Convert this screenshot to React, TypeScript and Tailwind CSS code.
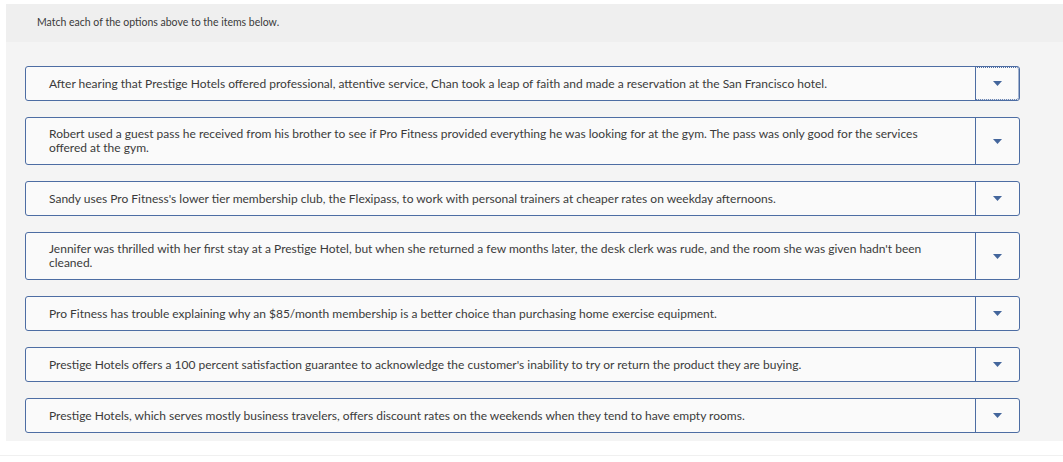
import React from "react";

const items = [
  "After hearing that Prestige Hotels offered professional, attentive service, Chan took a leap of faith and made a reservation at the San Francisco hotel.",
  "Robert used a guest pass he received from his brother to see if Pro Fitness provided everything he was looking for at the gym. The pass was only good for the services offered at the gym.",
  "Sandy uses Pro Fitness's lower tier membership club, the Flexipass, to work with personal trainers at cheaper rates on weekday afternoons.",
  "Jennifer was thrilled with her first stay at a Prestige Hotel, but when she returned a few months later, the desk clerk was rude, and the room she was given hadn't been cleaned.",
  "Pro Fitness has trouble explaining why an $85/month membership is a better choice than purchasing home exercise equipment.",
  "Prestige Hotels offers a 100 percent satisfaction guarantee to acknowledge the customer's inability to try or return the product they are buying.",
  "Prestige Hotels, which serves mostly business travelers, offers discount rates on the weekends when they tend to have empty rooms.",
];

const tall = [false, true, false, true, false, false, false];

export default function App() {
  return (
    <div className="w-[1063px] h-[462px] bg-white pt-[4px] pl-[6px]" style={{ fontFamily: "Lato, 'Open Sans', sans-serif" }}>
      <div className="bg-[#f4f4f4] h-[437px]">
        <div className="bg-[#efefef] h-[38px] pl-[31px] flex items-center text-[10.5px] text-[#3a3a3a]">
          Match each of the options above to the items below.
        </div>
        <div className="pt-[24px] pl-[19px] pr-[43px] flex flex-col gap-[16px]">
          {items.map((t, i) => (
            <div
              key={i}
              className={`flex ${tall[i] ? "h-[48px]" : "h-[35px]"} bg-[#fafafa] border border-[#4d6da3] rounded-[3px]`}
            >
              <div className="flex-1 flex items-center pl-[23px] pr-[48px] text-[12px] leading-[14px] text-[#3a3a3a]">
                {t}
              </div>
              <div
                className={`w-[44px] flex items-center justify-center border-l border-[#4d6da3] ${
                  i === 0 ? "outline-1 outline-dotted outline-[#4d6da3] -outline-offset-1 rounded-r-[3px]" : ""
                }`}
              >
                <svg width="9" height="5" viewBox="0 0 9 5">
                  <path d="M0 0 L9 0 L4.5 5 Z" fill="#44669c" />
                </svg>
              </div>
            </div>
          ))}
        </div>
      </div>
      <div className="h-px bg-[#f0f0f0] mt-[14px] -ml-[6px]" />
    </div>
  );
}
